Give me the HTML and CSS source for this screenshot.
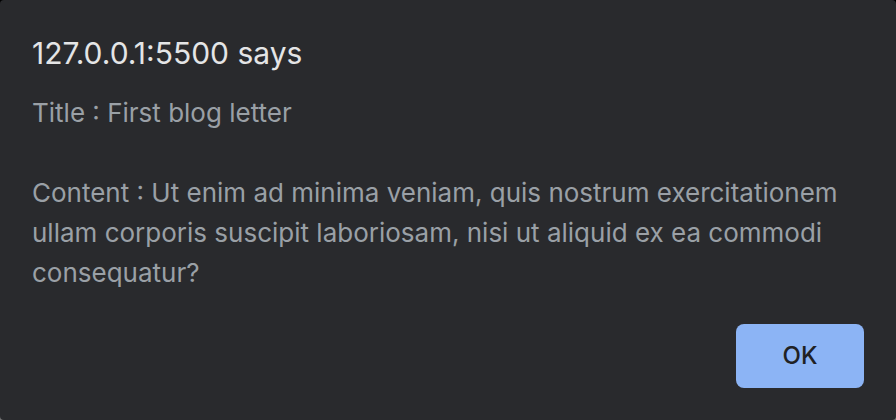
FILE: index.html
```html
<!DOCTYPE html>
<html lang="en">
<head>
<meta charset="utf-8">
<title>127.0.0.1:5500 says</title>
<link rel="stylesheet" href="styles.css">
</head>
<body>
<main class="dialog" role="alertdialog" aria-labelledby="dialog-title" aria-describedby="dialog-message">
  <h1 class="dialog-title" id="dialog-title">127.0.0.1:5500 says</h1>
  <div class="dialog-message" id="dialog-message">
    <p>Title : First blog letter</p>
    <p>Content : Ut enim ad minima veniam, quis nostrum exercitationem ullam corporis suscipit laboriosam, nisi ut aliquid ex ea commodi consequatur?</p>
  </div>
  <div class="dialog-actions">
    <button class="button" type="button">OK</button>
  </div>
</main>
</body>
</html>
```
FILE: styles.css
```css
* {
  box-sizing: border-box;
}

body {
  margin: 0;
  background: linear-gradient(#000 50%, #777 50%);
  font-family: Inter, "Liberation Sans", sans-serif;
}

.dialog {
  min-height: 100vh;
  padding: 32px;
  border-radius: 4px;
  background: #292a2d;
}

.dialog-title {
  margin: 0 0 18px;
  color: #e4e5e6;
  font-size: 30px;
  font-weight: 400;
  line-height: 43px;
}

.dialog-message {
  display: grid;
  gap: 40px;
  color: #9aa0a6;
  font-size: 26px;
  line-height: 40px;
}

.dialog-message p {
  margin: 0;
}

.dialog-actions {
  display: flex;
  justify-content: flex-end;
  margin-top: 31px;
}

.button {
  min-width: 128px;
  height: 64px;
  border: 0;
  border-radius: 8px;
  background: #8cb4f5;
  color: #202124;
  font: 500 24px/32px Inter, "Liberation Sans", sans-serif;
}
```
